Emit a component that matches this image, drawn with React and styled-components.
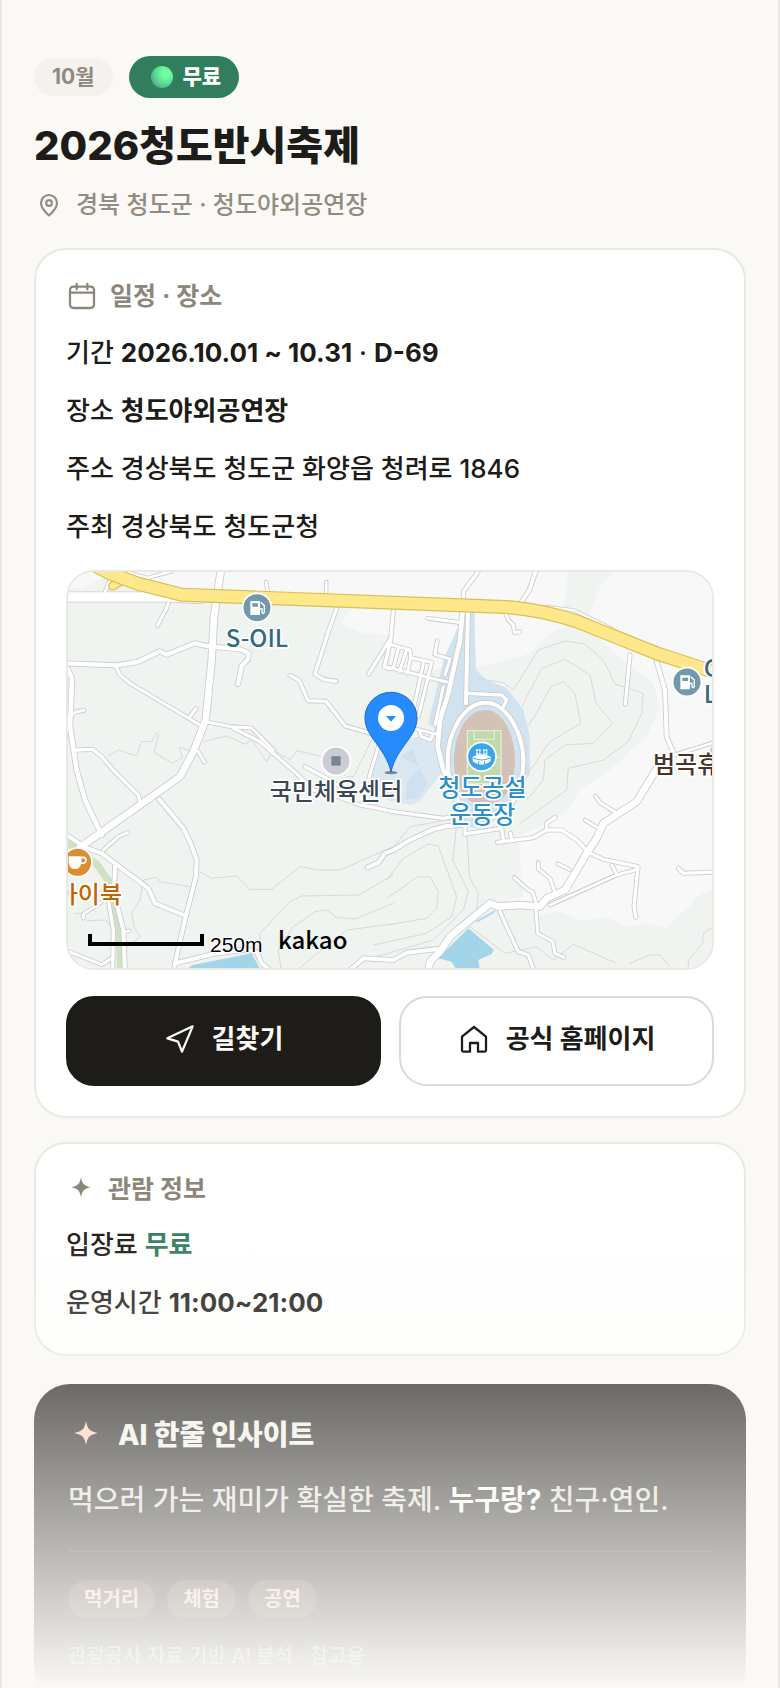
import React from "react";
import styled, { createGlobalStyle } from "styled-components";

const SCHEDULE = [
  { label: "기간", value: "2026.10.01 ~ 10.31", extra: "D-69" },
  { label: "장소", value: "청도야외공연장" },
  { label: "주소", plain: "경상북도 청도군 화양읍 청려로 1846" },
  { label: "주최", plain: "경상북도 청도군청" },
];

const TAGS = ["먹거리", "체험", "공연"];

// Map geometry: three units to one pixel
const ROADS = [
  { w: 28, d: "M0 111H330L420 116" },
  { w: 20, d: "M484 20L462 170L455 300L437 480L400 575L360 650L240 735L60 862" },
  { w: 13, d: "M20 310L170 316L232 306L300 274L320 284L405 250L440 258L540 268L566 280L564 298L545 318L534 372" },
  { w: 9, d: "M168 320L180 345L210 370L420 495M388 472L408 446" },
  { w: 9, d: "M415 575L433 606" },
  { w: 9, d: "M325 130L318 148L292 198" },
  { w: 8, d: "M190 34L262 54L335 34M135 95L150 60" },
  { w: 8, d: "M618 66L624 100M799 66L798 104" },
  { w: 10, d: "M830 145L805 215L765 342L790 358L828 364" },
  { w: 10, d: "M690 346L718 362L744 422L798 424L856 498L940 522" },
  { w: 10, d: "M992 235L926 342M1000 150L992 240L973 320L990 326" },
  { w: 9, d: "M437 485L515 500L575 504L640 570L636 580" },
  { w: 10, d: "M520 505L600 545L700 632L760 690L820 705L900 735L940 742L1000 755L1150 775L1180 770" },
  { w: 10, d: "M735 620L800 655L860 690" },
  { w: 9, d: "M955 560L925 660" },
  { w: 14, d: "M22 325L36 355L32 460L30 500L50 630L75 720L125 825" },
  { w: 9, d: "M30 468L50 455L72 451" },
  { w: 10, d: "M48 570L98 568L125 590L165 636L235 705L240 725" },
  { w: 12, d: "M20 825L75 862L125 880L265 985L285 1030L378 1068" },
  { w: 9, d: "M130 870L175 830L203 818" },
  { w: 12, d: "M298 718L370 805L392 850L410 900L408 950L378 1065L345 1210L340 1240" },
  { w: 12, d: "M345 1210L460 1182L560 1168L590 1176L605 1210L640 1240" },
  { w: 12, d: "M165 920L162 1000L190 1110L195 1240" },
  { w: 10, d: "M145 1020L160 1110L158 1240" },
  { w: 9, d: "M20 1172L125 1214L160 1192" },
  { w: 8, d: "M70 1075L70 1062L125 1026M190 1118L208 1112" },
  { w: 12, d: "M860 1240L910 1195L1000 1200L1040 1178L1140 1166" },
  { w: 12, d: "M923 922L955 908L975 880L1000 870L1050 840L1120 808L1160 798L1200 796" },
  { w: 10, d: "M1258 30L1210 95L1210 130" },
  { w: 14, d: "M1208 150L1200 240L1165 400L1140 480L1133 560L1150 630L1200 735" },
  { w: 12, d: "M1224 150L1218 430" },
  { w: 11, d: "M1429 30L1408 90L1385 125" },
  { w: 9, d: "M1103 175L1195 187" },
  { w: 9, d: "M1337 160L1345 180L1360 195L1363 218L1380 215" },
  { w: 9, d: "M1132 242L1124 283L1170 297L1155 345" },
  { w: 9, d: "M985 252L1050 270L1052 293L1115 307L1075 470M985 322L1160 366M1016 262L1000 325M1040 270L1018 335M1052 293L1042 340M1090 310L1060 450" },
  { w: 9, d: "M1150 380L1125 495M1060 505L1135 524M1080 515L1084 530L1112 540L1118 524" },
  { w: 10, d: "M1218 400L1325 405L1340 420L1330 440" },
  { w: 6, d: "M1460 140L1540 150L1655 205" },
  { w: 10, d: "M1710 285L1696 432" },
  { w: 12, d: "M1790 305L1815 390L1820 530L1842 582" },
  { w: 8, d: "M1845 584L1970 545M1760 665L1800 632" },
  { w: 20, d: "M1800 610L1730 725L1630 790L1610 835L1580 880L1515 990L1460 1015L1440 1040L1380 1035L1315 1040L1290 1030L1230 1080L1170 1130L1140 1175L1110 1205L1104 1240" },
  { w: 10, d: "M1215 790V822L1325 805L1330 840" },
  { w: 10, d: "M1312 847L1420 833L1460 810H1505L1550 840L1590 880L1630 898L1734 920L1722 1040L1728 1072M1460 810V790L1485 772M1352 820L1355 838" },
  { w: 9, d: "M1606 708L1620 728L1665 755M1575 780L1610 802" },
  { w: 9, d: "M1435 908V927L1470 955L1483 992M1494 912L1528 928" },
  { w: 9, d: "M1362 952L1405 990L1418 996L1428 1028M1428 1050L1433 1120L1478 1145L1485 1180L1512 1192" },
  { w: 9, d: "M1732 928L1670 945L1470 1035M1655 915L1670 942" },
  { w: 10, d: "M1856 925L1870 940L1970 936" },
  { w: 10, d: "M1320 1055L1335 1090L1375 1175L1405 1185L1425 1240" },
  { w: 12, d: "M1277 428C1345 428 1390 530 1390 600C1390 700 1345 775 1277 775C1210 775 1163 700 1163 600C1163 520 1210 428 1277 428Z" },
];

const CONTOURS = [
  "M1250 355L1330 368L1360 390L1435 270L1515 243L1575 252L1630 300L1665 372L1750 400L1745 460L1705 545L1630 600L1525 625L1520 690L1450 740L1380 790",
  "M1385 440L1445 325L1515 298L1590 345L1608 430L1658 490L1600 550L1515 555L1455 600L1450 660L1400 720",
  "M1405 500L1475 378L1510 365L1545 400L1562 490L1470 545L1410 630",
  "M145 588L175 570L230 588L245 545L275 545L288 518L296 524L282 578L338 610L368 592L358 562L400 575",
  "M430 545L500 528L555 553L575 540L620 605L640 570L690 600L710 572L780 588L860 650L880 650L940 530",
  "M420 935L455 955L530 948L570 988L635 988L720 920L775 930H840L1000 860",
  "M600 1170V1120L690 1025L725 1008L895 1005L1000 945",
  "M665 1240L655 1170L700 1100L765 1055L800 1050L830 1072L885 1077L1000 1030",
  "M700 1240L760 1190L860 1110L1000 1092",
  "M970 900L1050 800L1190 775",
  "M980 960L1030 895L1105 852L1135 858L1190 1010L1175 1070L1100 1120L940 1155",
  "M980 1015L1070 952L1110 950L1135 995L1130 1045L1100 1075L980 1095",
  "M1190 795L1178 900L1225 995L1210 1050L1120 1140L950 1190",
  "M1222 830L1228 950L1255 1000L1250 1050",
  "M390 980L300 965L290 952L250 960L240 1020L215 1060L222 1100L240 1130L215 1150",
  "M40 1060H80M80 1082L138 1080L160 1110",
  "M1230 1100L1335 1180L1430 1160L1480 1200L1540 1153L1670 1210",
  "M1708 1210L1770 1185H1800L1830 1220",
  "M1960 1100L1930 1120L1928 1150L1885 1200V1230",
];

const App = () => {
  return (
    <Page>
      <GlobalStyle />
      <Badges>
        <MonthBadge>10월</MonthBadge>
        <FreeBadge>
          <Orb />
          무료
        </FreeBadge>
      </Badges>
      <Title>2026청도반시축제</Title>
      <Location>
        <PinIcon />
        경북 청도군 · 청도야외공연장
      </Location>

      <Card>
        <CardTitle>
          <CalendarIcon />
          일정 · 장소
        </CardTitle>
        <Rows>
          {SCHEDULE.map((item) => (
            <Row key={item.label}>
              {item.label} {item.value && <strong>{item.value}</strong>}
              {item.extra && (
                <>
                  {" · "}
                  <strong>{item.extra}</strong>
                </>
              )}
              {item.plain}
            </Row>
          ))}
        </Rows>
        <MapBox>
          <FestivalMap />
        </MapBox>
        <Actions>
          <ActionLink href="#directions" $dark>
            <NavigationIcon />
            길찾기
          </ActionLink>
          <ActionLink href="#homepage">
            <HomeIcon />
            공식 홈페이지
          </ActionLink>
        </Actions>
      </Card>

      <Card>
        <CardTitle>
          <Sparkle size={30} />
          관람 정보
        </CardTitle>
        <Rows>
          <Row>
            입장료 <Free>무료</Free>
          </Row>
          <Row>
            운영시간 <strong>11:00~21:00</strong>
          </Row>
        </Rows>
      </Card>

      <Insight>
        <InsightTitle>
          <Sparkle size={36} />
          <span>AI 한줄 인사이트</span>
        </InsightTitle>
        <InsightText>
          먹으러 가는 재미가 확실한 축제. <strong>누구랑?</strong> 친구·연인.
        </InsightText>
        <Tags>
          {TAGS.map((tag) => (
            <Tag key={tag}>{tag}</Tag>
          ))}
        </Tags>
        <Source>관광공사 자료 기반 AI 분석 · 참고용</Source>
      </Insight>
      <Fade />
    </Page>
  );
};

export default App;

const PinIcon = () => (
  <LineIcon $size={30} viewBox="0 0 24 24" aria-hidden="true">
    <path d="M18.4 10.4c0 4.4-4.4 8.2-6.4 10-2-1.8-6.4-5.6-6.4-10a6.4 6.4 0 0 1 12.8 0z" />
    <circle cx="12" cy="10.4" r="2.3" />
  </LineIcon>
);

const CalendarIcon = () => (
  <LineIcon $size={32} viewBox="0 0 24 24" aria-hidden="true">
    <rect x="3" y="5" width="18" height="16" rx="2.4" />
    <path d="M3 9.5h18M8 3v4M16 3v4" />
  </LineIcon>
);

const NavigationIcon = () => (
  <LineIcon $size={32} viewBox="0 0 24 24" aria-hidden="true">
    <path d="M2.500 11.500L21.500 2.500l-8 19-3-7.500z" />
  </LineIcon>
);

const HomeIcon = () => (
  <LineIcon $size={32} viewBox="0 0 24 24" aria-hidden="true">
    <path d="M3 10.200L12 3l9 7.200V20.500a1 1 0 0 1-1 1h-5v-6.500H9v6.500H4a1 1 0 0 1-1-1z" />
  </LineIcon>
);

const Sparkle = ({ size }) => (
  <SolidIcon $size={size} viewBox="0 0 24 24" aria-hidden="true">
    <path d="M12 2.600c1 5.400 2.500 6.900 7.900 8-5.400 1.100-6.900 2.600-7.900 8-1-5.400-2.500-6.900-7.900-8 5.400-1.100 6.900-2.600 7.900-8z" />
  </SolidIcon>
);

const GasStation = ({ x, y }) => (
  <g transform={`translate(${x} ${y})`}>
    <circle r="43" fill="#7199ab" stroke="#fff" strokeWidth="5" />
    <path d="M-20-20H9V22H-20z" fill="#fff" />
    <path d="M-14-13H3V-3H-14z" fill="#7199ab" />
    <path d="M11-16L22-6V14Q18 20 15 14V4H9" fill="none" stroke="#fff" strokeWidth="4" />
  </g>
);

const FestivalMap = () => (
  <MapSvg
    viewBox="24 36 1932 1188"
    preserveAspectRatio="xMidYMid slice"
    role="img"
    aria-label="청도야외공연장 지도"
  >
    <path d="M0 0H2000V1300H0z" fill="#eff4f1" />
    <g fill="#f8f8f8">
      <path d="M24 80L50 36H386L400 100L240 60L150 46L60 86Z" />
      <path d="M386 30L396 100L880 140L840 190L905 218L1000 225L990 330L1130 325L1250 320L1310 310L1410 280L1470 220L1530 195L1580 200L1700 310L1780 370L1800 440L1760 530L1650 630L1560 690L1530 740L1500 770L1375 830L1380 900L1390 1010L1340 1020L1440 1065L1500 1055L1560 1080L1650 1075L1700 1100L1760 1090L1820 1103L1850 1070L1890 1040L1910 1010L1960 986V30Z" />
    </g>
    <path d="M1525 30H1660L1620 80L1588 168L1510 150Z" fill="#eff4f1" />
    <path d="M1208 170L1243 155L1248 330L1280 360L1340 385L1390 450L1408 520L1410 640L1350 740L1270 805L1215 800L1180 740L1150 640L1120 500L1105 490L1150 300Z" fill="#d0e3ef" />
    <path d="M960 560L1075 530L1130 540L1145 640L1105 690L1080 725L1050 735L980 720L930 650Z" fill="#dbe8f1" />
    <path d="M1020 590L1060 560L1080 620L1040 660L1035 720L1075 720L1105 670L1080 620" fill="#cfe1ee" stroke="#e2edf5" strokeWidth="3" />
    <g fill="#a3d5ea">
      <path d="M385 1224L395 1216L575 1180L602 1230H385Z" />
      <path d="M1225 1105L1302 1170L1295 1182L1255 1200L1260 1230H1190L1175 1205L1135 1195Z" />
      <path d="M1245 1085L1310 1048L1300 1060L1255 1085Z" />
      <path d="M1940 590L1960 550V580Z" />
    </g>
    <path d="M10 840L110 912L150 970L178 1100L182 1240" fill="none" stroke="#d0e2c4" strokeWidth="22" />
    <g fill="none" stroke="#d6dad7" strokeWidth="3">
      {CONTOURS.map((d) => (
        <path key={d} d={d} />
      ))}
    </g>
    <g fill="none" stroke="#cbcbcb" strokeLinecap="round" strokeLinejoin="round">
      {ROADS.map((road) => (
        <path key={road.d} d={road.d} strokeWidth={road.w + 5} />
      ))}
    </g>
    <g fill="none" stroke="#fff" strokeLinecap="round" strokeLinejoin="round">
      {ROADS.map((road) => (
        <path key={road.d} d={road.d} strokeWidth={road.w} />
      ))}
    </g>
    <path d="M1277 450C1330 450 1365 530 1365 600C1365 680 1330 735 1277 735C1215 735 1182 680 1182 600C1182 530 1215 450 1277 450Z" fill="#d5c2b6" />
    <path d="M1222 512H1323V670H1222z" fill="#c1d9ac" stroke="#e2eed8" strokeWidth="4" />
    <path d="M1242 514V538H1303V514M1222 592H1323" fill="none" stroke="#e2eed8" strokeWidth="4" />
    <path d="M205 62L165 88Q148 94 146 78Q148 66 160 64" fill="#ffe98a" stroke="#dac254" strokeWidth="4" />
    <g fill="none">
      <path d="M100 14L150 40L230 70L365 104L1340 141Q1450 150 1550 184L1700 244L1790 280L2000 348" stroke="#d6c152" strokeWidth="42" />
      <path d="M100 14L150 40L230 70L365 104L1340 141Q1450 150 1550 184L1700 244L1790 280L2000 348" stroke="#ffe88c" strokeWidth="35" />
    </g>

    <GasStation x={591} y={143} />
    <GasStation x={1881} y={366} />
    <g transform="translate(828 603)">
      <circle r="43" fill="#cdccd4" stroke="#fff" strokeWidth="5" />
      <path d="M-14-14H14V14H-14z" fill="#78878b" />
    </g>
    <g transform="translate(53 907)">
      <circle r="43" fill="#da8d36" stroke="#fff" strokeWidth="5" />
      <path d="M-27-18H11V2Q8 20-8 20Q-24 20-27 2z" fill="#fff" />
      <circle cx="16" cy="-6" r="9" fill="none" stroke="#fff" strokeWidth="5" />
    </g>
    <g transform="translate(1265 590)">
      <circle r="43" fill="#3aa6e5" stroke="#fff" strokeWidth="5" />
      <path d="M-17-22H-3V-6H-17zM4-22H17V-6H4z" fill="#fff" />
      <path d="M-10-22V-6M10-22V-6M-17-14H17" stroke="#3aa6e5" strokeWidth="3" />
      <path d="M-27 0Q0-14 27 0V14Q0 34-27 14z" fill="#fff" />
      <path d="M-25 4Q0 16 25 4M-9 13V24M9 13V24" fill="none" stroke="#3aa6e5" strokeWidth="3" />
    </g>

    <MapLabel x="591" y="262" fill="#35697f">S-OIL</MapLabel>
    <MapLabel x="828" y="720" fill="#3b4851">국민체육센터</MapLabel>
    <MapLabel x="1267" y="708" fill="#2b8fcc">청도공설</MapLabel>
    <MapLabel x="1267" y="788" fill="#2b8fcc">운동장</MapLabel>
    <MapLabel x="1779" y="640" fill="#4b3226" $anchor="start">범곡휴</MapLabel>
    <MapLabel x="1931" y="350" fill="#35697f" $anchor="start">G</MapLabel>
    <MapLabel x="1931" y="430" fill="#35697f" $anchor="start">L</MapLabel>
    <MapLabel x="186" y="1028" fill="#c56300" $anchor="end">아이북</MapLabel>

    <ellipse cx="993" cy="638" rx="19" ry="5" fill="#4d5a68" opacity="0.7" />
    <path d="M993 397C1037 397 1071 432 1071 474C1071 532 1010 560 993 636C976 560 915 532 915 474C915 432 949 397 993 397Z" fill="#258bff" stroke="#1b68cf" strokeWidth="3" />
    <circle cx="993" cy="474" r="39" fill="#fff" />
    <path d="M978 468H1008L993 485Z" fill="#258bff" />

    <path d="M90 1122V1152H426V1122" fill="none" stroke="#000" strokeWidth="12" />
    <ScaleText x="450" y="1175">250m</ScaleText>
    <BrandText x="654" y="1168">kakao</BrandText>
  </MapSvg>
);

const GlobalStyle = createGlobalStyle`
  * {
    box-sizing: border-box;
  }
  body {
    margin: 0;
    background: #faf9f5;
    color: #1d1c18;
    font-family: Inter, "Noto Sans CJK KR", sans-serif;
    font-size: 26px;
    font-weight: 500;
  }
  h1, h2, p {
    margin: 0;
  }
`;
const Page = styled.main`
  position: relative;
  height: 100vh;
  overflow: hidden;
  padding: 56px 32px 0;
  border: solid #e9e8e1;
  border-width: 0 2px;
`;
const Badges = styled.div`
  display: flex;
  align-items: center;
  gap: 16px;
`;
const MonthBadge = styled.span`
  padding: 0 18px;
  border-radius: 20px;
  background: #f3f2ed;
  color: #8f8a7d;
  font-size: 21px;
  font-weight: 700;
  line-height: 38px;
`;
const FreeBadge = styled.span`
  display: flex;
  align-items: center;
  gap: 10px;
  padding: 0 18px 0 22px;
  border-radius: 22px;
  background: #307e5c;
  color: #fff;
  font-size: 21px;
  font-weight: 800;
  line-height: 42px;
`;
const Orb = styled.i`
  width: 22px;
  height: 22px;
  border-radius: 50%;
  background: radial-gradient(circle at 68% 34%, #74ffa6 0 14%, #5adb93 50%, #4e9b8c 85%);
`;
const Title = styled.h1`
  margin-top: 22px;
  font-size: 40px;
  font-weight: 800;
  line-height: 52px;
`;
const Location = styled.p`
  display: flex;
  align-items: center;
  gap: 12px;
  margin: 18px 0 28px;
  color: #918c7f;
  font-size: 24px;
  line-height: 30px;
`;
const Card = styled.section`
  margin-bottom: 24px;
  padding: 30px;
  border: 2px solid #e9e8e1;
  border-radius: 32px;
  background: #fff;
`;
const CardTitle = styled.h2`
  display: flex;
  align-items: center;
  gap: 12px;
  margin-bottom: 20px;
  color: #8c877a;
  font-size: 25px;
  font-weight: 700;
  line-height: 30px;
`;
const Rows = styled.div`
  display: grid;
  gap: 16px;
`;
const Row = styled.p`
  line-height: 42px;
`;
const Free = styled.strong`
  color: #307e5c;
`;
const MapBox = styled.div`
  margin: 22px 0 26px;
  overflow: hidden;
  border: 2px solid #e9e8e1;
  border-radius: 28px;
`;
const MapSvg = styled.svg`
  display: block;
  width: 100%;
  height: 396px;
`;
const MapLabel = styled.text`
  font-family: "Noto Sans CJK KR", sans-serif;
  font-size: 72px;
  font-weight: 500;
  text-anchor: ${({ $anchor }) => $anchor || "middle"};
  paint-order: stroke;
  stroke: #fff;
  stroke-width: 10px;
  stroke-linejoin: round;
`;
const ScaleText = styled.text`
  font-family: "Liberation Sans", sans-serif;
  font-size: 63px;
  font-weight: 400;
  paint-order: stroke;
  stroke: #fff;
  stroke-width: 5px;
`;
const BrandText = styled.text`
  font-family: "Noto Sans CJK KR", sans-serif;
  font-size: 72px;
  font-weight: 500;
`;
const Actions = styled.div`
  display: grid;
  grid-template-columns: 1fr 1fr;
  gap: 18px;
`;
const ActionLink = styled.a`
  display: flex;
  align-items: center;
  justify-content: center;
  gap: 16px;
  height: 90px;
  padding-bottom: 4px;
  border: 2px solid ${({ $dark }) => ($dark ? "#1d1c18" : "#dcdad2")};
  border-radius: 28px;
  background: ${({ $dark }) => ($dark ? "#1d1c18" : "#fff")};
  color: ${({ $dark }) => ($dark ? "#faf9f5" : "#1d1c18")};
  font-size: 26px;
  font-weight: 700;
  line-height: 30px;
  text-decoration: none;
`;
const LineIcon = styled.svg`
  flex: none;
  width: ${({ $size }) => $size}px;
  height: ${({ $size }) => $size}px;
  fill: none;
  stroke: currentColor;
  stroke-width: 1.7;
  stroke-linecap: round;
  stroke-linejoin: round;
`;
const SolidIcon = styled.svg`
  flex: none;
  width: ${({ $size }) => $size}px;
  height: ${({ $size }) => $size}px;
  fill: currentColor;
`;
const Insight = styled.section`
  margin-top: 28px;
  padding: 32px 34px 34px;
  border-radius: 36px;
  background: #1d1c18;
  color: #faf9f5;
`;
const InsightTitle = styled.h2`
  display: flex;
  align-items: center;
  gap: 14px;
  color: #ffcbbc;
  font-size: 28px;
  font-weight: 800;
  line-height: 38px;

  span {
    color: #f4f2ec;
  }
`;
const InsightText = styled.p`
  padding: 24px 0 28px;
  border-bottom: 2px solid #33322e;
  color: #e0ded8;
  font-size: 28px;
  line-height: 44px;

  strong {
    color: #fff;
  }
`;
const Tags = styled.div`
  display: flex;
  gap: 12px;
  margin: 28px 0 24px;
`;
const Tag = styled.span`
  padding: 0 16px;
  border-radius: 20px;
  background: #4a3a34;
  color: #ffcbbc;
  font-size: 20px;
  font-weight: 700;
  line-height: 38px;
`;
const Source = styled.p`
  color: #a5a299;
  font-size: 20px;
  line-height: 28px;
`;
const Fade = styled.div`
  position: absolute;
  right: -2px;
  bottom: 0;
  left: -2px;
  height: 468px;
  background: linear-gradient(rgba(250, 249, 245, 0), #faf9f5);
  pointer-events: none;
`;
